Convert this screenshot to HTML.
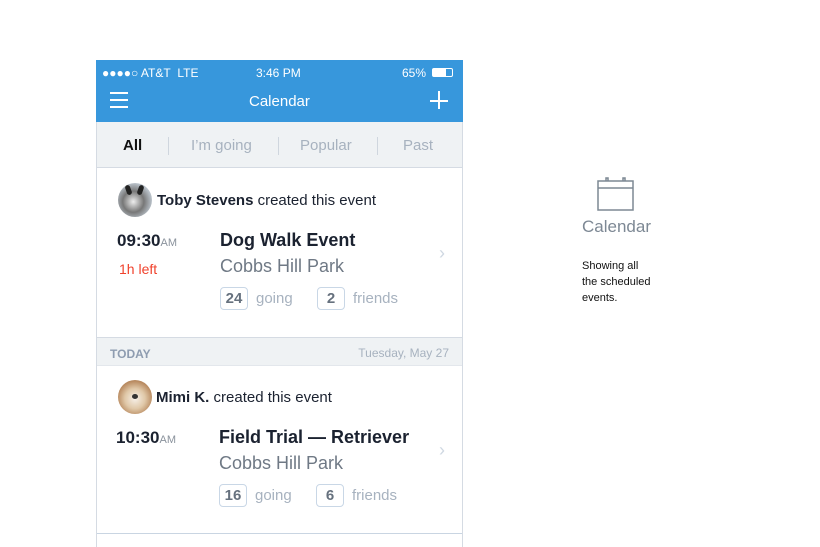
<!DOCTYPE html>
<html><head><meta charset="utf-8"><style>
*{margin:0;padding:0;box-sizing:border-box}
body{width:820px;height:547px;background:#fff;font-family:"Liberation Sans",sans-serif;position:relative;overflow:hidden}
.abs{position:absolute}
.phone{left:96px;top:60px;width:367px;height:487px;border-left:1px solid #d5dbe3;border-right:1px solid #d5dbe3;background:#fff}
.bar{left:96px;top:60px;width:367px;height:62px;background:#3797dc;color:#fff}
.tabs{left:97px;top:122px;width:365px;height:46px;background:#eff2f4;border-bottom:1px solid #d5dbe3}
.t{position:absolute;top:15px;font-size:15px;color:#a7b2bf}
.sep{position:absolute;top:15px;width:1px;height:18px;background:#cfd6de}
.sec{left:97px;top:337px;width:365px;height:29px;background:#eff2f4;border-top:1px solid #d5dbe3;border-bottom:1px solid #e3e7ec}
.av{width:34px;height:34px;border-radius:50%}
.row{display:flex;align-items:center;height:23px}
.badge{display:flex;align-items:center;justify-content:center;border:1.5px solid #c9d7e6;border-radius:4px;height:23px;width:28px;font-weight:bold;color:#66717e;font-size:15px;margin-right:8px}
.g{color:#a7b2bf;font-size:15px}
</style></head><body>
<div class="abs phone"></div>
<div class="abs bar">
 <div class="abs" style="left:6px;top:6px;font-size:12px">●●●●○ AT&amp;T&nbsp; LTE</div>
 <div class="abs" style="left:160px;top:6px;font-size:12px">3:46 PM</div>
 <div class="abs" style="left:306px;top:6px;font-size:12px">65%</div>
 <div class="abs" style="left:336px;top:8px;width:21px;height:9px;border:1px solid #fff;border-radius:2px"><div style="width:13px;height:7px;background:#fff"></div></div>
 <div class="abs" style="left:14px;top:32px;width:18px;height:2px;background:#fff;box-shadow:0 7px 0 #fff,0 14px 0 #fff"></div>
 <div class="abs" style="left:153px;top:33px;font-size:15px">Calendar</div>
 <div class="abs" style="left:334px;top:40px;width:18px;height:1.5px;background:#fff"></div>
 <div class="abs" style="left:342px;top:31px;width:1.5px;height:18px;background:#fff"></div>
</div>
<div class="abs tabs">
 <div class="t" style="left:26px;color:#111;font-weight:bold">All</div>
 <div class="sep" style="left:71px"></div>
 <div class="t" style="left:94px">I’m going</div>
 <div class="sep" style="left:181px"></div>
 <div class="t" style="left:203px">Popular</div>
 <div class="sep" style="left:280px"></div>
 <div class="t" style="left:306px">Past</div>
</div>

<div class="abs av" style="left:118px;top:183px;background:radial-gradient(circle at 45% 55%,#eee 0,#777 40%,#b9c1c9 70%)"><div style="position:absolute;left:8px;top:2px;width:5px;height:10px;background:#222;border-radius:3px;transform:rotate(-20deg)"></div><div style="position:absolute;left:20px;top:2px;width:5px;height:10px;background:#222;border-radius:3px;transform:rotate(20deg)"></div></div>
<div class="abs" style="left:157px;top:192px;font-size:15px;color:#1b2230"><b>Toby Stevens</b> created this event</div>
<div class="abs" style="left:117px;top:231px;font-size:17px;font-weight:bold;color:#1b2230">09:30<span style="font-size:11px;font-weight:normal;color:#8a929c">AM</span></div>
<div class="abs" style="left:119px;top:261px;font-size:14px;color:#f0422c">1h left</div>
<div class="abs" style="left:220px;top:230px;font-size:18px;font-weight:bold;color:#1b2230">Dog Walk Event</div>
<div class="abs" style="left:220px;top:256px;font-size:18px;color:#6f7985">Cobbs Hill Park</div>
<div class="abs row" style="left:220px;top:287px"><span class="badge">24</span><span class="g">going</span></div>
<div class="abs row" style="left:317px;top:287px"><span class="badge">2</span><span class="g">friends</span></div>
<div class="abs" style="left:439px;top:243px;color:#cfd8e2;font-size:18px">›</div>

<div class="abs sec">
 <div class="abs" style="left:13px;top:9px;font-size:12px;font-weight:bold;color:#8e9cb0">TODAY</div>
 <div class="abs" style="right:13px;top:8px;font-size:12px;color:#a7b2bf">Tuesday, May 27</div>
</div>

<div class="abs av" style="left:118px;top:380px;background:radial-gradient(circle at 50% 55%,#f6f0e8 0,#e0c8a8 40%,#b88a60 70%)"><div style="position:absolute;left:14px;top:14px;width:6px;height:5px;background:#333;border-radius:50%"></div></div>
<div class="abs" style="left:156px;top:389px;font-size:15px;color:#1b2230"><b>Mimi K.</b> created this event</div>
<div class="abs" style="left:116px;top:428px;font-size:17px;font-weight:bold;color:#1b2230">10:30<span style="font-size:11px;font-weight:normal;color:#8a929c">AM</span></div>
<div class="abs" style="left:219px;top:427px;font-size:18px;font-weight:bold;color:#1b2230">Field Trial — Retriever</div>
<div class="abs" style="left:219px;top:453px;font-size:18px;color:#6f7985">Cobbs Hill Park</div>
<div class="abs row" style="left:219px;top:484px"><span class="badge">16</span><span class="g">going</span></div>
<div class="abs row" style="left:316px;top:484px"><span class="badge">6</span><span class="g">friends</span></div>
<div class="abs" style="left:439px;top:440px;color:#cfd8e2;font-size:18px">›</div>
<div class="abs" style="left:97px;top:533px;width:365px;height:1px;background:#c9d5e2"></div>

<svg class="abs" style="left:597px;top:176px" width="38" height="36" viewBox="0 0 38 36" fill="none" stroke="#7d8894" stroke-width="1.5"><rect x="1" y="5" width="35" height="29"/><line x1="1" y1="12" x2="36" y2="12"/><path d="M9 5V2h2v3M26 5V2h2v3"/></svg>
<div class="abs" style="left:582px;top:217px;font-size:17px;color:#7d8894">Calendar</div>
<div class="abs" style="left:582px;top:258px;font-size:11px;line-height:16px;color:#111">Showing all<br>the scheduled<br>events.</div>
</body></html>
